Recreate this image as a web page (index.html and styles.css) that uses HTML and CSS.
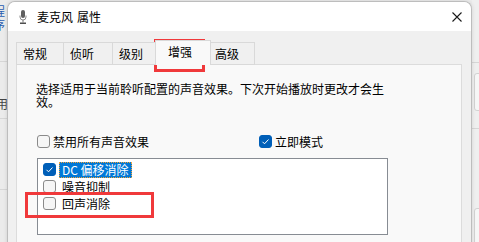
FILE: index.html
```html
<!DOCTYPE html>
<html lang="zh-CN">
<head>
<meta charset="utf-8">
<title>麦克风 属性</title>
<link rel="stylesheet" href="styles.css">
</head>
<body>
<div class="desk">
  <div class="bg-left">
    <span class="bg-link">程序</span>
    <span class="bg-text">用</span>
    <i class="bg-line l1"></i><i class="bg-line l2"></i><i class="bg-line l3"></i>
  </div>
  <div class="bg-right">
    <i class="bg-line r1"></i><i class="bg-line r2"></i>
    <i class="bg-box b1"></i><i class="bg-box b2"></i>
  </div>

  <div class="window">
    <div class="titlebar">
      <svg class="app-icon" width="8" height="14" viewBox="0 0 8 14">
        <rect x="2" y="0" width="4" height="8" rx="2" fill="#5f5f5f"/>
        <path d="M1 5.5v1.5a3 3 0 0 0 6 0V5.5" stroke="#8a8a8a" fill="none"/>
        <rect x="3.5" y="10" width="1" height="2.5" fill="#7a7a7a"/>
        <rect x="1" y="12.5" width="6" height="1.5" fill="#4f4f4f"/>
      </svg>
      <span class="title">麦克风<span class="sp"> </span>属性</span>
      <svg class="close" width="10" height="10" viewBox="0 0 10 10">
        <path d="M0.5 0.5L9.5 9.5M9.5 0.5L0.5 9.5" stroke="#1a1a1a" stroke-width="1.1"/>
      </svg>
    </div>
    <div class="client">
      <div class="tabs">
        <div class="tab t1">常规</div>
        <div class="tab t2">侦听</div>
        <div class="tab t3">级别</div>
        <div class="tab t4 selected">增强</div>
        <div class="tab t5">高级</div>
      </div>
      <div class="panel">
        <p class="desc">选择适用于当前聆听配置的声音效果。下次开始播放时更改才会生效。</p>
        <div class="opts">
          <label class="opt opt-a"><span class="cb"></span><span>禁用所有声音效果</span></label>
          <label class="opt"><span class="cb on"><svg width="13" height="13" viewBox="0 0 13 13"><path d="M3.5 6.8l2 2 4-4.3" stroke="#fff" fill="none" stroke-width="1"/></svg></span><span>立即模式</span></label>
        </div>
        <div class="listbox">
          <div class="item"><span class="cb on"><svg width="13" height="13" viewBox="0 0 13 13"><path d="M3.5 6.8l2 2 4-4.3" stroke="#fff" fill="none" stroke-width="1"/></svg></span><span class="lbl focus">DC 偏移消除</span></div>
          <div class="item"><span class="cb"></span><span class="lbl">噪音抑制</span></div>
          <div class="item"><span class="cb"></span><span class="lbl">回声消除</span></div>
        </div>
      </div>
    </div>
  </div>

  <div class="mark mark-tab"></div>
  <div class="mark mark-item"></div>
</div>
</body>
</html>
```

FILE: styles.css
```css
html, body {
  margin: 0;
  padding: 0;
}
body {
  width: 479px;
  height: 242px;
  overflow: hidden;
  background: #ececec;
  font-family: "Noto Sans CJK SC", "Noto Sans", sans-serif;
  font-size: 12px;
  color: #000;
}
.desk {
  position: relative;
  width: 479px;
  height: 242px;
  overflow: hidden;
}

/* background windows */
.bg-left {
  position: absolute;
  left: 0;
  top: 0;
  width: 8px;
  height: 242px;
  background: #ebebeb;
  overflow: hidden;
}
.bg-link {
  position: absolute;
  left: -7px;
  top: 4px;
  color: #2a5db0;
  font-size: 12px;
  line-height: 14px;
}
.bg-text {
  position: absolute;
  left: -4px;
  top: 97px;
  color: #444;
  font-size: 12px;
  line-height: 14px;
}
.bg-line {
  position: absolute;
  left: 0;
  right: 0;
  height: 1px;
  background: #d6d6d6;
}
.l1 { top: 61px; }
.l2 { top: 118px; }
.l3 { top: 189px; }
.bg-right {
  position: absolute;
  left: 472px;
  top: 0;
  width: 7px;
  height: 242px;
  background: #efefef;
}
.r1 { top: 62px; }
.r2 { top: 128px; }
.bg-box {
  position: absolute;
  left: 2px;
  width: 10px;
  border: 1px solid #d2d2d2;
  border-radius: 3px;
  background: #f6f6f6;
}
.b1 { top: 73px; height: 36px; }
.b2 { top: 208px; height: 40px; }

/* main dialog window */
.window {
  position: absolute;
  left: 7px;
  top: 1px;
  width: 463px;
  height: 270px;
  border: 1px solid #bdbdbd;
  border-bottom: none;
  border-radius: 8px 8px 0 0;
  background: #f0f0f0;
  box-shadow: 0 0 4px rgba(0, 0, 0, 0.12);
  overflow: hidden;
}
.titlebar {
  display: flex;
  align-items: center;
  height: 29px;
  background: #fff;
}
.app-icon {
  margin-left: 11px;
  margin-top: 1px;
}
.title {
  margin-left: 10px;
  line-height: 29px;
}
.title .sp {
  display: inline-block;
  width: 4px;
}
.close {
  margin-left: auto;
  margin-right: 9px;
}

.client {
  padding: 9px 9px 0 8px;
}
.tabs {
  display: flex;
  align-items: flex-end;
  height: 25px;
  margin-bottom: -1px;
  position: relative;
  z-index: 1;
}
.tab {
  box-sizing: border-box;
  height: 23px;
  border: 1px solid #d9d9d9;
  background: #f0f0f0;
  padding: 1px 0 0 6px;
  line-height: 20px;
  margin-left: -1px;
}
.t1 { width: 48px; margin-left: 0; }
.t2 { width: 50px; }
.t3 { width: 46px; }
.t5 { width: 47px; }
.tab.selected {
  position: relative;
  z-index: 2;
  width: 56px;
  height: 25px;
  margin-left: -3px;
  margin-right: -2px;
  padding: 0 0 0 12px;
  line-height: 21px;
  background: #f9f9f9;
  border-bottom: none;
}

.panel {
  box-sizing: border-box;
  height: 200px;
  background: #f9f9f9;
  border: 1px solid #dcdcdc;
  padding: 17px 0 0 19px;
}
.desc {
  margin: 0;
  width: 355px;
  line-height: 13px;
}
.opts {
  display: flex;
  margin-top: 26px;
  height: 15px;
}
.opt {
  display: flex;
  align-items: center;
  gap: 3px;
  line-height: 15px;
}
.opt-a {
  width: 222px;
  margin-left: 1px;
}

.cb {
  box-sizing: border-box;
  flex: none;
  display: block;
  width: 13px;
  height: 13px;
  border: 1px solid #8a8a8a;
  border-radius: 3px;
  background: #f6f6f6;
  position: relative;
}
.cb.on {
  border-color: #005fb8;
  background: #005fb8;
}
.cb svg {
  position: absolute;
  left: -1px;
  top: -1px;
}

.listbox {
  box-sizing: border-box;
  width: 351px;
  height: 77px;
  margin: 9px 0 0 1px;
  border: 1px solid #878c93;
  background: #fff;
  padding: 2px 0 0 5px;
}
.item {
  display: flex;
  align-items: center;
  height: 17px;
}
.lbl {
  margin-left: 3px;
  padding: 0 2px;
  border: 1px solid transparent;
  line-height: 14px;
  white-space: nowrap;
}
.lbl.focus {
  background: #0078d7;
  color: #fff;
  border: 1px dotted #f2a33a;
}

/* red annotation boxes */
.mark {
  position: absolute;
  box-sizing: border-box;
  border: 3px solid #f0393b;
}
.mark-tab {
  left: 154px;
  top: 39px;
  width: 51px;
  height: 33px;
}
.mark-item {
  left: 25px;
  top: 192px;
  width: 129px;
  height: 26px;
}
```
